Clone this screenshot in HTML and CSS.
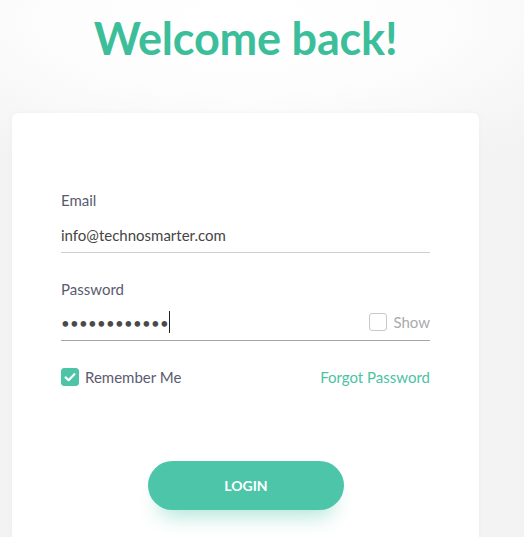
FILE: index.html
```html
<!DOCTYPE html>
<html lang="en">
<head>
<meta charset="utf-8">
<title>Login</title>
<link rel="stylesheet" href="styles.css">
</head>
<body>
<div class="wrap">
  <h1 class="title">Welcome back!</h1>
  <form class="card">
    <label class="field">
      <span class="label">Email</span>
      <span class="line"><span class="value">info@technosmarter.com</span></span>
    </label>
    <div class="field">
      <span class="label">Password</span>
      <span class="line line-dark">
        <span class="dots">&#8226;&#8226;&#8226;&#8226;&#8226;&#8226;&#8226;&#8226;&#8226;&#8226;&#8226;&#8226;</span><span class="caret"></span>
        <span class="show"><span class="box"></span>Show</span>
      </span>
    </div>
    <div class="opts">
      <span class="remember"><span class="box box-on"><svg viewBox="0 0 18 18" width="18" height="18"><path d="M4.6 9.4 L7.6 12.2 L13.4 6.2" fill="none" stroke="#fff" stroke-width="2.2" stroke-linecap="round" stroke-linejoin="round"/></svg></span>Remember Me</span>
      <a class="forgot" href="#">Forgot Password</a>
    </div>
    <div class="actions">
      <button type="button" class="btn">LOGIN</button>
    </div>
  </form>
</div>
</body>
</html>
```
FILE: styles.css
```css
html, body {
  margin: 0;
  height: 100%;
}
body {
  font-family: Lato, "Open Sans", sans-serif;
  background: radial-gradient(ellipse 420px 160px at 245px 20px, #ffffff 0%, #fdfdfd 45%, #f3f3f3 100%) no-repeat, #f4f4f4;
  overflow: hidden;
}
.wrap {
  width: 467px;
  margin-left: 12px;
  padding-top: 9px;
}
.title {
  margin: 0;
  text-align: center;
  font-size: 45px;
  line-height: 58px;
  font-weight: 700;
  color: #3dbe9b;
  letter-spacing: -0.2px;
}
.card {
  margin-top: 46px;
  background: #fff;
  border-radius: 6px 6px 0 0;
  box-shadow: 0 0 6px rgba(0,0,0,0.03);
  padding: 78px 49px 0;
  height: 424px;
  box-sizing: border-box;
}
.field {
  display: block;
  margin-bottom: 27px;
}
.label {
  display: block;
  font-size: 15px;
  line-height: 18px;
  color: #5b5b70;
  margin-bottom: 15px;
}
.line {
  display: flex;
  align-items: center;
  height: 28px;
  border-bottom: 1px solid #cfcfcf;
  font-size: 15px;
  color: #454545;
}
.line-dark {
  border-bottom-color: #a6a6a6;
  height: 27px;
}
.value {
  line-height: 18px;
  padding-bottom: 6px;
}
.dots {
  font-size: 15px;
  letter-spacing: 0.3px;
  color: #4a4a4a;
  padding-bottom: 8px;
}
.caret {
  display: inline-block;
  width: 1px;
  height: 22px;
  background: #222;
  margin-left: 0;
  margin-bottom: 10px;
}
.show {
  margin-left: auto;
  display: flex;
  align-items: center;
  color: #aaa;
  font-size: 15px;
  padding-bottom: 10px;
}
.box {
  display: inline-flex;
  width: 18px;
  height: 18px;
  box-sizing: border-box;
  border: 1px solid #c8c8c8;
  border-radius: 3px;
  margin-right: 5px;
}
.show .box {
  margin-right: 6px;
}
.box-on {
  background: #4dc4a7;
  border-color: #4dc4a7;
  margin-right: 6px;
}
.box-on svg {
  margin: -1px;
}
.opts {
  display: flex;
  justify-content: space-between;
  align-items: center;
  margin-top: 1px;
  font-size: 15px;
}
.remember {
  display: flex;
  align-items: center;
  color: #5b5b70;
}
.forgot {
  color: #4cc2a4;
  text-decoration: none;
}
.actions {
  display: flex;
  justify-content: center;
  margin-top: 75px;
}
.btn {
  width: 196px;
  height: 49px;
  border: 0;
  border-radius: 25px;
  background: #4dc5a9;
  color: #fff;
  font-family: Lato, sans-serif;
  font-weight: 700;
  font-size: 14px;
  box-shadow: 0 16px 20px -10px rgba(77, 197, 169, 0.45);
  margin-left: 1px;
}
```
